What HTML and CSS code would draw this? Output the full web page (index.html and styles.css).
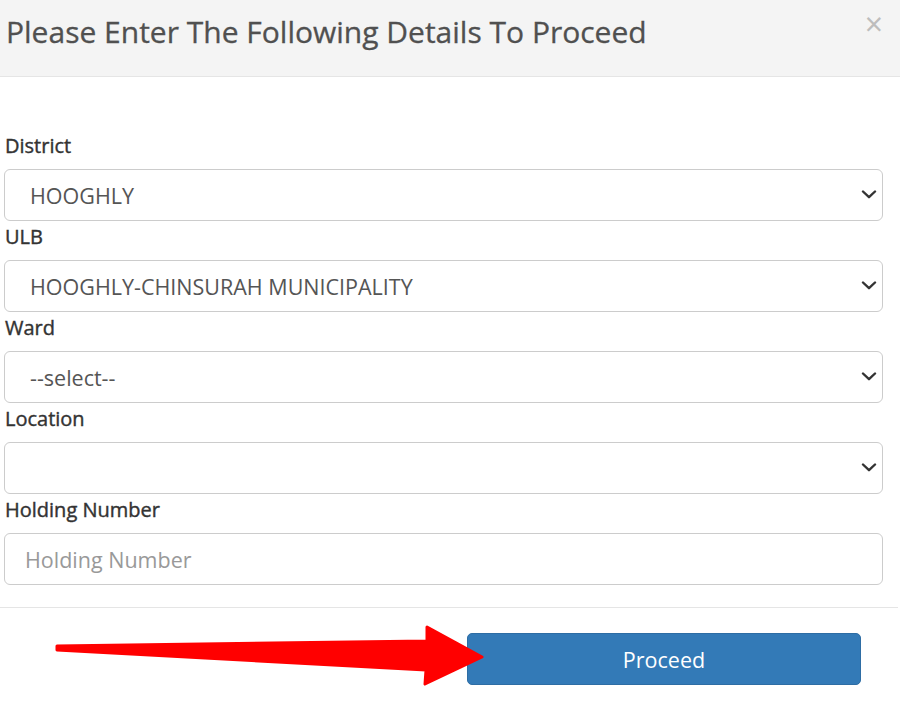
FILE: index.html
```html
<!DOCTYPE html>
<html lang="en">
<head>
  <meta charset="UTF-8" />
  <meta name="viewport" content="width=device-width, initial-scale=1.0"/>
  <title>Details</title>
  <link rel="stylesheet" href="styles.css">
</head>
<body>

  <div class="modal">
    <div class="modal-header">
      <h4 class="modal-title">Please Enter The Following Details To Proceed</h4>
      <button class="close" type="button" aria-label="Close">&times;</button>
    </div>

    <form class="modal-body">
      <div class="form-group">
        <label for="district">District</label>
        <div class="select-wrap">
          <select id="district" class="form-control">
            <option>HOOGHLY</option>
          </select>
          <svg class="chevron" viewBox="0 0 16 9" aria-hidden="true"><path d="M2 1.5 8 7.2 14 1.5"/></svg>
        </div>
      </div>
      <div class="form-group">
        <label for="ulb">ULB</label>
        <div class="select-wrap">
          <select id="ulb" class="form-control">
            <option>HOOGHLY-CHINSURAH MUNICIPALITY</option>
          </select>
          <svg class="chevron" viewBox="0 0 16 9" aria-hidden="true"><path d="M2 1.5 8 7.2 14 1.5"/></svg>
        </div>
      </div>
      <div class="form-group">
        <label for="ward">Ward</label>
        <div class="select-wrap">
          <select id="ward" class="form-control">
            <option>--select--</option>
          </select>
          <svg class="chevron" viewBox="0 0 16 9" aria-hidden="true"><path d="M2 1.5 8 7.2 14 1.5"/></svg>
        </div>
      </div>
      <div class="form-group">
        <label for="location">Location</label>
        <div class="select-wrap">
          <select id="location" class="form-control">
            <option></option>
          </select>
          <svg class="chevron" viewBox="0 0 16 9" aria-hidden="true"><path d="M2 1.5 8 7.2 14 1.5"/></svg>
        </div>
      </div>
      <div class="form-group">
        <label for="holding">Holding Number</label>
        <input id="holding" class="form-control input" type="text" placeholder="Holding Number">
      </div>
    </form>

    <div class="modal-footer">
      <button class="btn-proceed" type="button">Proceed</button>
    </div>

    <!-- flecha roja sobre el pie -->
    <svg class="arrow" viewBox="0 0 900 705" aria-hidden="true">
      <polygon points="57,646 427,641 427,627 482,657 425,684 426,670 57,650"/>
    </svg>
  </div>

</body>
</html>
```

FILE: styles.css
```css
body {
  margin: 0;
  background: #fff;
  font-family: "Open Sans", "Liberation Sans", Arial, sans-serif;
  color: #333;
}

.modal {
  position: relative;
  height: 705px;
  overflow: hidden;
}

/* Cabecera */
.modal-header {
  display: flex;
  align-items: flex-start;
  justify-content: space-between;
  height: 76px;
  padding: 0 0 0 6px;
  background: #f4f4f4;
  border-bottom: 1px solid #e5e5e5;
}

.modal-title {
  margin: 11px 0 0;
  font-size: 30px;
  font-weight: 400;
  line-height: 42px;
  color: #505050;
  -webkit-text-stroke: 0.3px #505050;
}

.close {
  margin: 6px 17px 0 0;
  padding: 0;
  background: none;
  border: none;
  font-family: "Open Sans", sans-serif;
  font-size: 32px;
  font-weight: 400;
  line-height: 36px;
  color: #bdbdbd;
  cursor: pointer;
}

/* Cuerpo */
.modal-body {
  display: block;
  padding: 55px 17px 20px 4px;
}

.form-group {
  margin-bottom: 2px;
}

.form-group label {
  display: block;
  margin: 0 0 9px 1px;
  font-size: 20px;
  font-weight: 400;
  line-height: 28px;
  color: #333;
  -webkit-text-stroke: 0.4px #333;
}

.select-wrap {
  position: relative;
}

.form-control {
  display: block;
  box-sizing: border-box;
  width: 100%;
  height: 52px;
  padding: 0 44px 0 25px;
  background: #fff;
  border: 1px solid #ccc;
  border-radius: 6px;
  font-family: "Open Sans", sans-serif;
  font-size: 21.5px;
  color: #555;
  appearance: none;
  -webkit-appearance: none;
  outline: none;
}

.input {
  padding-left: 20px;
}
.input::placeholder {
  color: #999;
}

.chevron {
  position: absolute;
  top: 21px;
  right: 6px;
  width: 16px;
  height: 9px;
  fill: none;
  stroke: #333;
  stroke-width: 2.4;
  stroke-linecap: round;
  stroke-linejoin: round;
  pointer-events: none;
}

/* Pie */
.modal-footer {
  padding: 25px 37px 0 0;
  border-top: 1px solid #e5e5e5;
  margin-right: 2px;
  text-align: right;
}

.btn-proceed {
  width: 394px;
  height: 52px;
  background: #337ab7;
  border: 1px solid #2e6da4;
  border-radius: 5px;
  font-family: "Open Sans", sans-serif;
  font-size: 21.5px;
  color: #fff;
  cursor: pointer;
}

.arrow {
  position: absolute;
  top: 0;
  left: 0;
  width: 900px;
  height: 705px;
  fill: #ff0000;
  stroke: #ff0000;
  stroke-width: 3;
  stroke-linejoin: round;
  pointer-events: none;
}
```
